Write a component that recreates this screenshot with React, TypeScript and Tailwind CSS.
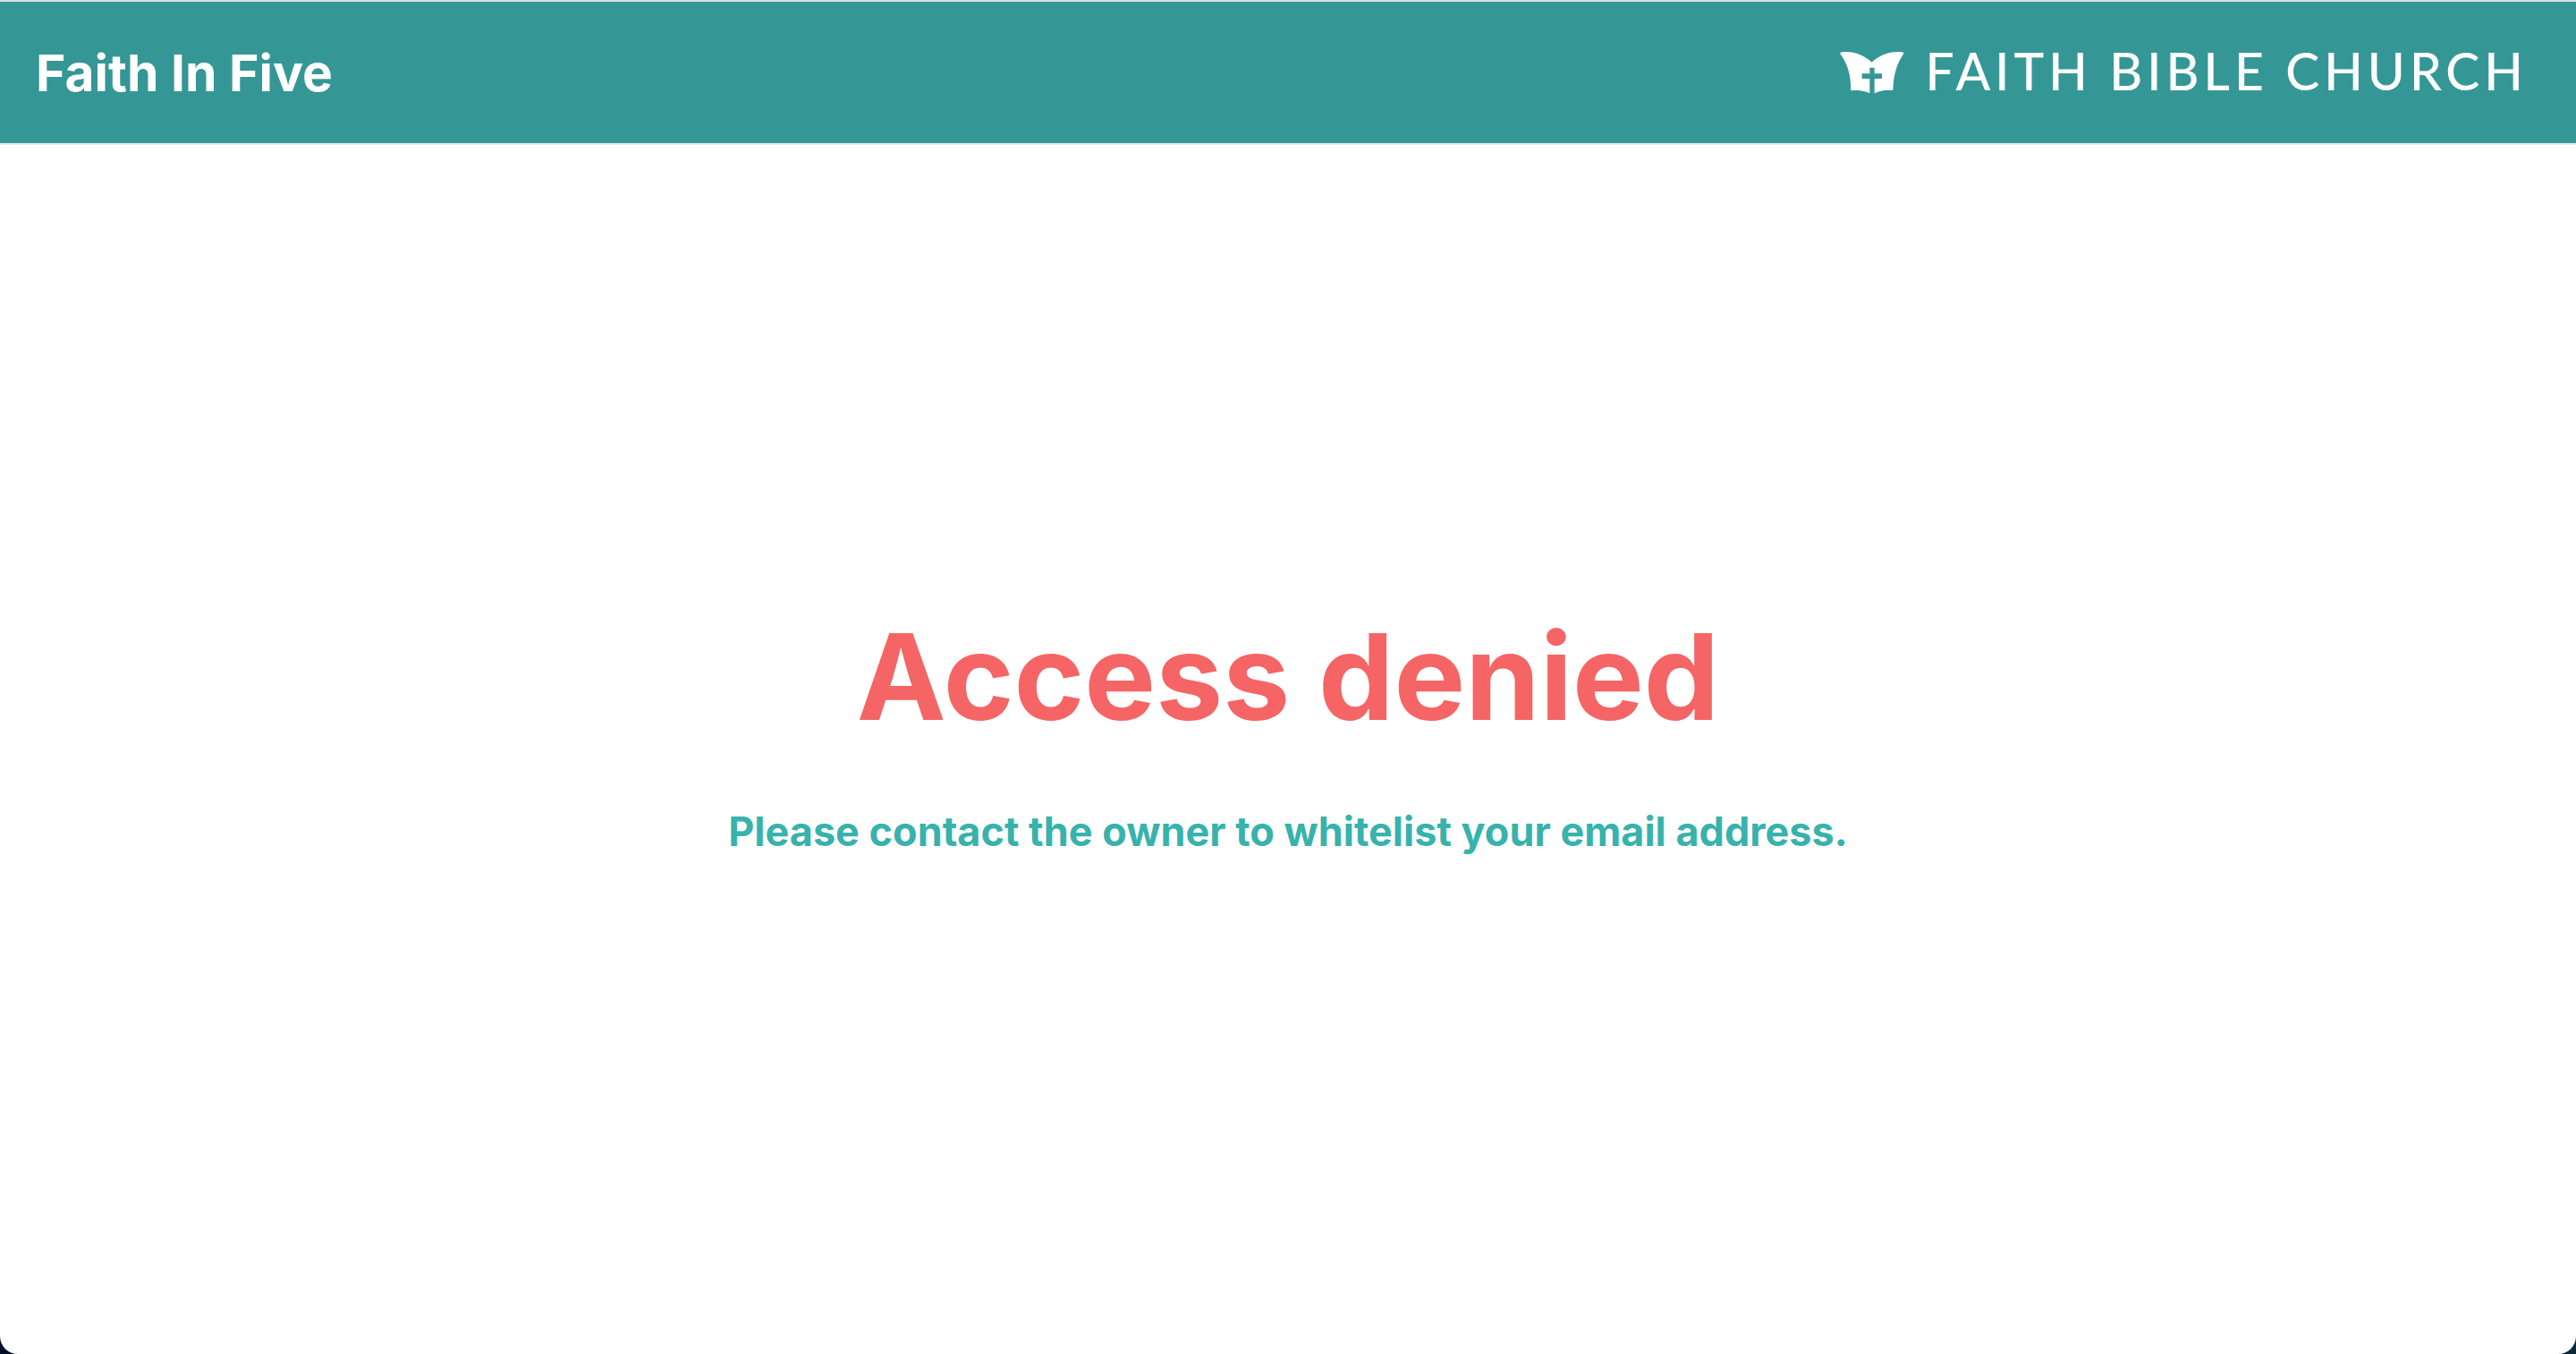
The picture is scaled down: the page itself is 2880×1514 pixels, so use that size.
function BookIcon() {
  return (
    <svg viewBox="45 50 216 144" className="h-12 w-18" fill="currentColor" aria-hidden="true">
      <path d="M46 59C45 56 47 55 52 54C88 49 124 62 152 88C180 62 216 49 254 54C259 55 261 56 259 59C236 92 225 128 223 182C195 180 175 186 161 192V143H186V126H161V106H145V126H119V143H145V192C130 184 110 180 82 183C82 128 70 92 46 59Z" />
    </svg>
  );
}

export default function App() {
  return (
    <div className="bg-linear-to-r from-[#001028] to-[#0a2a3a] font-['Inter',sans-serif]">
      <div className="flex min-h-screen flex-col overflow-hidden rounded-b-[20px] border-t-2 border-[#dcdedd] bg-white">
        <header className="flex h-40 items-center justify-between border-b-2 border-[#e2e8f0] bg-[#359795] pr-[54px] pl-10 text-white">
          <h1 className="text-[57px] leading-none font-bold">Faith In Five</h1>
          <a href="#" className="flex items-center gap-6">
            <BookIcon />
            <span className="pb-1 font-['Lato',sans-serif] text-[57px] leading-none font-medium tracking-[5px]">
              FAITH BIBLE CHURCH
            </span>
          </a>
        </header>
        <main className="flex flex-1 flex-col items-center justify-center gap-[84px] pb-9 text-center font-bold">
          <h2 className="text-[134px] leading-none text-[#f56565]">Access denied</h2>
          <p className="text-[45px] leading-none text-[#38b2ac]">
            Please contact the owner to whitelist your email address.
          </p>
        </main>
      </div>
    </div>
  );
}
